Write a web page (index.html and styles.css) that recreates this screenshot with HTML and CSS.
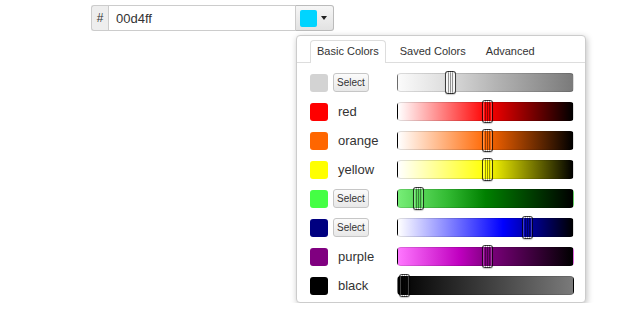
FILE: index.html
```html
<!DOCTYPE html>
<html lang="en">
<head>
    <meta charset="UTF-8">
    <title>Color Picker</title>
    <link rel="stylesheet" href="styles.css">
</head>
<body>

<div class="picker">
    <div class="input-group">
        <span class="addon">#</span>
        <input class="hex" type="text" value="00d4ff">
        <span class="toggle"><span class="current"></span><span class="caret"></span></span>
    </div>

    <div class="dropdown">
        <ul class="tabs">
            <li class="active">Basic Colors</li>
            <li>Saved Colors</li>
            <li>Advanced</li>
        </ul>

        <div class="rows">
            <div class="row">
                <span class="swatch c-gray"></span>
                <span class="name"><span class="select">Select</span></span>
                <div class="slider s-gray"><span class="handle light" style="left: 30.5%"></span></div>
            </div>
            <div class="row">
                <span class="swatch c-red"></span>
                <span class="name label">red</span>
                <div class="slider s-red"><span class="handle" style="left: 51.5%"></span></div>
            </div>
            <div class="row">
                <span class="swatch c-orange"></span>
                <span class="name label">orange</span>
                <div class="slider s-orange"><span class="handle" style="left: 51.5%"></span></div>
            </div>
            <div class="row">
                <span class="swatch c-yellow"></span>
                <span class="name label">yellow</span>
                <div class="slider s-yellow"><span class="handle" style="left: 51.5%"></span></div>
            </div>
            <div class="row">
                <span class="swatch c-green"></span>
                <span class="name"><span class="select">Select</span></span>
                <div class="slider s-green"><span class="handle" style="left: 11.8%"></span></div>
            </div>
            <div class="row">
                <span class="swatch c-navy"></span>
                <span class="name"><span class="select">Select</span></span>
                <div class="slider s-navy"><span class="handle" style="left: 74%"></span></div>
            </div>
            <div class="row">
                <span class="swatch c-purple"></span>
                <span class="name label">purple</span>
                <div class="slider s-purple"><span class="handle" style="left: 51.5%"></span></div>
            </div>
            <div class="row">
                <span class="swatch c-black"></span>
                <span class="name label">black</span>
                <div class="slider s-black"><span class="handle" style="left: 4%"></span></div>
            </div>
        </div>
    </div>
</div>

</body>
</html>
```

FILE: styles.css
```css
/* General */
body {
    margin: 0;
    background-color: #fff;
    font-family: "Liberation Sans", Arial, sans-serif;
    color: #333;
}
.picker {
    padding: 5px 0 0 91px;
}

/* Input group */
.input-group {
    display: flex;
    height: 26px;
}
.addon {
    box-sizing: border-box;
    width: 17px;
    height: 26px;
    border: 1px solid #ccc;
    border-right: none;
    border-radius: 3px 0 0 3px;
    background-color: #eee;
    font-size: 12px;
    line-height: 24px;
    text-align: center;
    color: #333;
}
.hex {
    box-sizing: border-box;
    width: 188px;
    height: 26px;
    margin: 0;
    padding: 0 7px;
    border: 1px solid #ccc;
    font-family: inherit;
    font-size: 13px;
    color: #333;
    outline: none;
}
.toggle {
    box-sizing: border-box;
    display: flex;
    align-items: center;
    width: 38px;
    height: 26px;
    padding: 0 0 0 4px;
    border: 1px solid #bbb;
    border-left: none;
    border-radius: 0 3px 3px 0;
    background: linear-gradient(#f6f6f6, #e2e2e2);
}
.current {
    width: 17px;
    height: 17px;
    border-radius: 2px;
    background-color: #00d4ff;
}
.caret {
    margin-left: 4px;
    border-top: 4px solid #222;
    border-left: 3px solid transparent;
    border-right: 3px solid transparent;
}

/* Dropdown */
.dropdown {
    box-sizing: border-box;
    width: 290px;
    height: 268px;
    margin: 4px 0 0 205px;
    border: 1px solid #ccc;
    border-radius: 4px;
    background-color: #fff;
    box-shadow: 1px 2px 6px rgba(0, 0, 0, 0.25);
}
.tabs {
    display: flex;
    margin: 0;
    padding: 4px 13px 0;
    list-style: none;
    border-bottom: 1px solid #ddd;
    font-size: 11px;
}
.tabs li {
    margin: 0 4px -1px 0;
    padding: 0 6px 1px;
    line-height: 21px;
    border: 1px solid transparent;
    border-bottom: none;
    border-radius: 4px 4px 0 0;
    color: #333;
}
.tabs li + li {
    margin-right: 0;
    padding: 0 9px 1px;
}
.tabs li.active {
    border-color: #ddd;
    background-color: #fff;
}

/* Rows */
.rows {
    padding: 5px 0 0 13px;
}
.row {
    display: flex;
    align-items: center;
    height: 29px;
}
.swatch {
    width: 18px;
    height: 18px;
    margin-right: 5px;
    border-radius: 3px;
}
.name {
    box-sizing: border-box;
    width: 64px;
    font-size: 13px;
    color: #333;
}
.name.label {
    padding-left: 5px;
}
.select {
    box-sizing: border-box;
    display: block;
    width: 36px;
    height: 19px;
    border: 1px solid #c6c6c6;
    border-radius: 3px;
    background: linear-gradient(#fbfbfb, #e8e8e8);
    font-size: 10px;
    line-height: 17px;
    text-align: center;
    color: #333;
}
.slider {
    position: relative;
    box-sizing: border-box;
    width: 177px;
    height: 19px;
    border: 1px solid rgba(0, 0, 0, 0.12);
    border-radius: 4px;
}
.handle {
    position: absolute;
    top: -3px;
    box-sizing: border-box;
    width: 11px;
    height: 23px;
    margin-left: -6px;
    border: 1px solid rgba(0, 0, 0, 0.75);
    border-radius: 3px;
    background: linear-gradient(to right, transparent 2px, rgba(0, 0, 0, 0.4) 2px, rgba(0, 0, 0, 0.4) 3px, transparent 3px, transparent 4px, rgba(0, 0, 0, 0.4) 4px, rgba(0, 0, 0, 0.4) 5px, transparent 5px, transparent 6px, rgba(0, 0, 0, 0.4) 6px, rgba(0, 0, 0, 0.4) 7px, transparent 7px);
    box-shadow: inset 0 0 0 1px rgba(255, 255, 255, 0.25), 0 1px 1px rgba(0, 0, 0, 0.2);
}
.handle.light {
    background-color: #f4f4f4;
}

/* Colours */
.c-gray { background-color: #d3d3d3; }
.c-red { background-color: #ff0000; }
.c-orange { background-color: #ff6600; }
.c-yellow { background-color: #ffff00; }
.c-green { background-color: #44ff44; }
.c-navy { background-color: #000080; }
.c-purple { background-color: #800080; }
.c-black { background-color: #000; }

.s-gray { background: linear-gradient(to right, #fbfbfb, #e0e0e0 25%, #b5b5b5 55%, #7a7a7a); }
.s-red { background: linear-gradient(to right, #fff, #ff0000 51%, #000); }
.s-orange { background: linear-gradient(to right, #fff, #ff6600 51%, #000); }
.s-yellow { background: linear-gradient(to right, #fff, #ffff00 51%, #000); }
.s-green { background: linear-gradient(to right, #77ee77, #33bb33 28%, #008000 50%, #000); }
.s-navy { background: linear-gradient(to right, #fff, #0000ff 60%, #000); }
.s-purple { background: linear-gradient(to right, #ff77ff, #c000c0 35%, #800080 51%, #000); }
.s-black { background: linear-gradient(to right, #000, #7a7a7a); }
```
